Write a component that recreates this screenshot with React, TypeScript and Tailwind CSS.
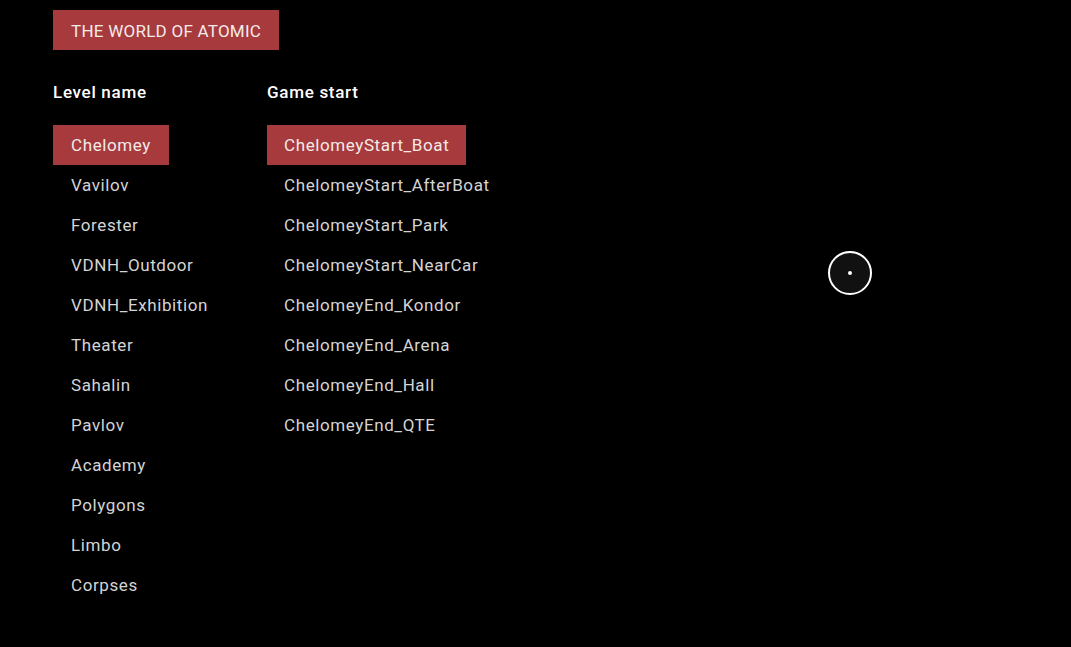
const levels = [
  'Chelomey',
  'Vavilov',
  'Forester',
  'VDNH_Outdoor',
  'VDNH_Exhibition',
  'Theater',
  'Sahalin',
  'Pavlov',
  'Academy',
  'Polygons',
  'Limbo',
  'Corpses',
];

const starts = [
  'ChelomeyStart_Boat',
  'ChelomeyStart_AfterBoat',
  'ChelomeyStart_Park',
  'ChelomeyStart_NearCar',
  'ChelomeyEnd_Kondor',
  'ChelomeyEnd_Arena',
  'ChelomeyEnd_Hall',
  'ChelomeyEnd_QTE',
];

function Item({ label, active, pad }: { label: string; active?: boolean; pad: string }) {
  return (
    <div className="flex h-10 items-center">
      <span
        className={`inline-flex h-10 items-center pt-[2px] ${pad} ${
          active ? 'bg-[#a63a3c] text-[#f4eaea]' : 'text-[#d4d4d4]'
        }`}
      >
        {label}
      </span>
    </div>
  );
}

function Column({
  title,
  items,
  width,
  pad,
}: {
  title: string;
  items: string[];
  width: string;
  pad: string;
}) {
  return (
    <div className={`flex flex-col ${width}`}>
      <h2 className="h-[30px] text-[17px] font-medium leading-[30px] tracking-[0.7px] text-white">{title}</h2>
      <div className="mt-[18px] flex flex-col">
        {items.map((item, i) => (
          <Item key={item} label={item} active={i === 0} pad={pad} />
        ))}
      </div>
    </div>
  );
}

export default function App() {
  return (
    <div
      className="relative h-[647px] w-full overflow-hidden bg-black pl-[53px] pt-[10px] text-[17px] tracking-[0.6px]"
      style={{ fontFamily: 'Roboto, "Liberation Sans", sans-serif' }}
    >
      <div className="inline-flex h-10 items-center bg-[#a63a3c] px-[18px] pt-[3px] text-[17px] tracking-[0.25px] text-[#f4eaea]">
        THE WORLD OF ATOMIC
      </div>
      <div className="mt-[27px] flex">
        <Column title="Level name" items={levels} width="w-[214px]" pad="px-[18px]" />
        <Column title="Game start" items={starts} width="w-[260px]" pad="px-[17px]" />
      </div>

      <div className="absolute left-[828px] top-[251px] flex h-11 w-11 items-center justify-center rounded-full border-2 border-white bg-[#111]">
        <div className="h-[4px] w-[4px] rounded-full bg-white" />
      </div>
    </div>
  );
}
